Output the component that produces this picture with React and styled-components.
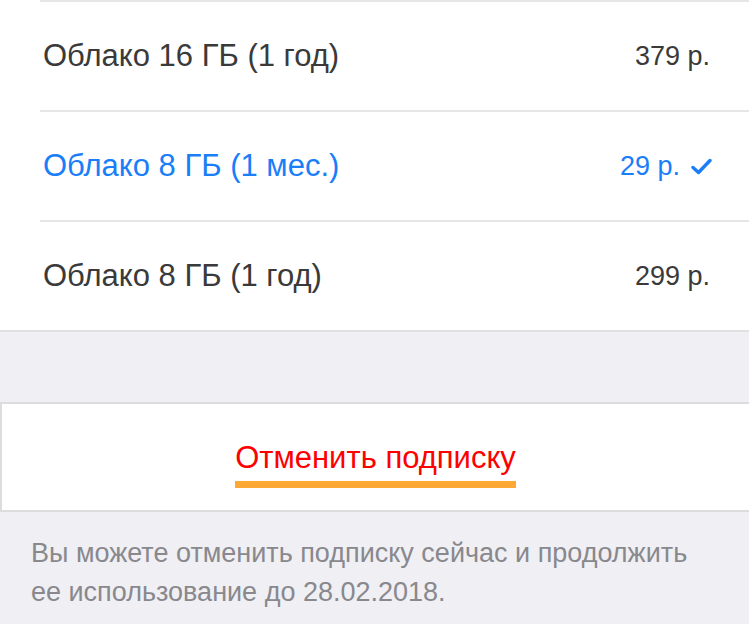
import styled, { createGlobalStyle } from "styled-components";

const GlobalStyle = createGlobalStyle`
  body {
    margin: 0;
    background: #efeff4;
    font-family: "Liberation Sans", Arial, sans-serif;
  }
`;

const plans = [
  { title: "Облако 16 ГБ (1 год)", price: "379 р." },
  { title: "Облако 8 ГБ (1 мес.)", price: "29 р.", selected: true },
  { title: "Облако 8 ГБ (1 год)", price: "299 р." },
];

const Page = styled.div`
  width: 749px;
  height: 624px;
  overflow: hidden;
  background: #efeff4;
  font-family: "Liberation Sans", Arial, sans-serif;
`;

const List = styled.div`
  background: #fff;
  border-bottom: 2px solid #e0e0e2;
`;

const Row = styled.div`
  height: 108px;
  margin-left: 40px;
  padding: 0 39px 0 3px;
  border-top: 2px solid #e6e6e8;
  display: flex;
  align-items: center;
  justify-content: space-between;
  color: ${(p) => (p.$selected ? "#1a7ef8" : "#3a3a3a")};
`;

const Title = styled.span`
  font-size: 31px;
`;

const Trailing = styled.span`
  display: flex;
  align-items: center;
  gap: 11px;
`;

const Price = styled.span`
  font-size: 27px;
`;

const Check = styled.svg`
  width: 21px;
  height: 17px;
  margin-right: -2px;
`;

const Gap = styled.div`
  height: 70px;
`;

const CancelBox = styled.div`
  background: #fff;
  border-top: 2px solid #dcdcde;
  border-bottom: 2px solid #dcdcde;
  border-left: 2px solid #dcdcde;
  padding: 37px 0 22px;
  text-align: center;
`;

const CancelLabel = styled.span`
  display: inline-block;
  font-size: 31px;
  line-height: 34px;
  color: #fe0000;
  padding-bottom: 6px;
  border-bottom: 7px solid #fda934;
`;

const Note = styled.p`
  margin: 0;
  padding: 22px 30px 0 31px;
  font-size: 27px;
  line-height: 39px;
  color: #88888d;
`;

export default function App() {
  return (
    <Page>
      <GlobalStyle />
      <List>
        {plans.map((plan) => (
          <Row key={plan.title} $selected={plan.selected}>
            <Title>{plan.title}</Title>
            <Trailing>
              <Price>{plan.price}</Price>
              {plan.selected && (
                <Check viewBox="0 0 21 17">
                  <path
                    d="M2 9.5 L7.5 14.5 L19 2.5"
                    fill="none"
                    stroke="currentColor"
                    strokeWidth="3.4"
                    strokeLinecap="round"
                    strokeLinejoin="round"
                  />
                </Check>
              )}
            </Trailing>
          </Row>
        ))}
      </List>
      <Gap />
      <CancelBox>
        <CancelLabel>Отменить подписку</CancelLabel>
      </CancelBox>
      <Note>
        Вы можете отменить подписку сейчас и продолжить ее использование до
        28.02.2018.
      </Note>
    </Page>
  );
}
